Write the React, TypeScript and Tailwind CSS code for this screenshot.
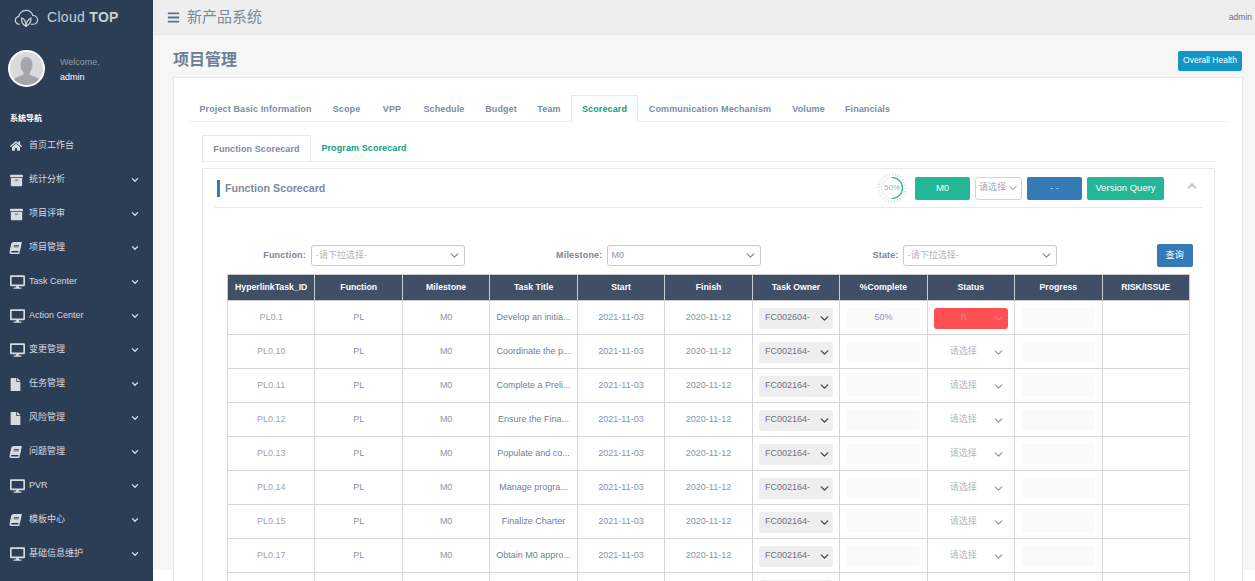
import React from "react";
import { FaHome, FaArchive, FaBook, FaDesktop, FaFile, FaBars } from "react-icons/fa";
import { ChevronDown, ChevronUp } from "lucide-react";

const FONT = "font-['Liberation_Sans','Noto_Sans_CJK_SC',sans-serif]";

const navItems = [
  { icon: "archive", label: "统计分析" },
  { icon: "archive", label: "项目评审" },
  { icon: "book", label: "项目管理" },
  { icon: "desktop", label: "Task Center" },
  { icon: "desktop", label: "Action Center" },
  { icon: "desktop", label: "变更管理" },
  { icon: "file", label: "任务管理" },
  { icon: "file", label: "风险管理" },
  { icon: "book", label: "问题管理" },
  { icon: "desktop", label: "PVR" },
  { icon: "book", label: "模板中心" },
  { icon: "desktop", label: "基础信息维护" }
];

const tabs = [
  { label: "Project Basic Information", width: "w-[133px]" },
  { label: "Scope", width: "w-[49px]" },
  { label: "VPP", width: "w-[42px]" },
  { label: "Schedule", width: "w-[62px]" },
  { label: "Budget", width: "w-[52px]" },
  { label: "Team", width: "w-[44px]" },
  { label: "Scorecard", width: "w-[67px]" },
  { label: "Communication Mechanism", width: "w-[144px]" },
  { label: "Volume", width: "w-[53px]" },
  { label: "Financials", width: "w-[65px]" }
];
const columns = ["HyperlinkTask_ID", "Function", "Milestone", "Task Title", "Start", "Finish", "Task Owner", "%Complete", "Status", "Progress", "RISK/ISSUE"];

const rows = [
  { id: "PL0.1", title: "Develop an initia...", owner: "FC002604-", pct: "50%", status: "R" },
  { id: "PL0.10", title: "Coordinate the p...", owner: "FC002164-" },
  { id: "PL0.11", title: "Complete a Preli...", owner: "FC002164-" },
  { id: "PL0.12", title: "Ensure the Fina...", owner: "FC002164-" },
  { id: "PL0.13", title: "Populate and co...", owner: "FC002164-" },
  { id: "PL0.14", title: "Manage progra...", owner: "FC002164-" },
  { id: "PL0.15", title: "Finalize Charter", owner: "FC002164-" },
  { id: "PL0.17", title: "Obtain M0 appro...", owner: "FC002164-" }
];

const cell = "border border-[#d6d6d6] text-center align-middle p-0 pt-px";

function NavIcon({ name }: { name: string }) {
  if (name === "archive") return <FaArchive className="w-[13px] h-[13px]" />;
  if (name === "book") return <FaBook className="w-[11px] h-3 -skew-x-12" />;
  if (name === "desktop") return <FaDesktop className="w-[15px] h-[14px]" />;
  return <FaFile className="w-[11px] h-[13px]" />;
}

function Logo() {
  return (
    <svg viewBox="0 0 26 20" className="w-[25px] h-[20px] text-[#c9d0d8]" fill="none" stroke="currentColor" strokeWidth="1.300">
      <path d="M6 16.500c-2.600 0-4.600-1.700-4.600-4 0-2 1.500-3.600 3.500-3.900C5.400 4.800 8.600 2 12.400 2c3.500 0 6.300 2.200 7.100 5.300 2.700.1 5 2 5 4.800 0 2.600-2.100 4.400-4.700 4.400h-2.500" />
      <path d="M12.500 18.500c-3.500-1.500-5-4.500-4.500-8.500 2.800.8 4.500 3.500 4.500 8.500z" />
      <path d="M12.500 18.500c.2-4 1.800-7 5-8.500.4 3.800-1.200 6.800-5 8.500z" />
    </svg>
  );
}

function Avatar() {
  return (
    <div className="w-[37px] h-[37px] rounded-full border-2 border-white bg-[#d9dadc] overflow-hidden shrink-0">
      <svg viewBox="0 0 33 33" className="w-full h-full" fill="#a4a6a9">
        <ellipse cx="16.500" cy="13" rx="6" ry="8" />
        <path d="M13.500 19h6v3.500l8 3.500c1.500.8 2 3 2 7H3.500c0-4 .5-6.200 2-7l8-3.500z" />
      </svg>
    </div>
  );
}

function Gauge() {
  return (
    <div className="relative w-[30px] h-[30px]">
      <svg viewBox="0 0 30 30" className="w-full h-full" fill="none">
        <circle cx="15" cy="15" r="13.500" stroke="#d5d8dc" strokeWidth="2" strokeDasharray="1 2" />
        <circle cx="15" cy="15" r="10.500" stroke="#e6e8ea" strokeWidth="1" />
        <path d="M15 4.500a10.500 10.500 0 0 1 0 21" stroke="#1ab394" strokeWidth="1.200" />
      </svg>
      <span className="absolute inset-0 flex items-center justify-center text-[8px] text-[#a6adb8]">50%</span>
    </div>
  );
}

function FilterSelect({ value, muted, className }: { value: string; muted?: boolean; className: string }) {
  return (
    <div className={`h-[21px] w-[154px] border border-[#c9c9c9] rounded-[3px] bg-white flex items-center justify-between pl-1 pr-[3px] text-[9px] font-normal tracking-normal ${muted ? "text-[#b0b6c0]" : "text-[#8a94a6]"} ${className}`}>
      <span>{value}</span>
      <ChevronDown className="w-[13px] h-[13px] text-[#7b8594]" strokeWidth={2} />
    </div>
  );
}

function TableRow({ row }: { row: (typeof rows)[number] }) {
  return (
    <tr className="h-[34px] text-[9px] text-[#8a94a6]">
      <td className={`${cell} text-[#a3a3a8]`}>{row.id}</td>
      <td className={cell}>PL</td>
      <td className={cell}>M0</td>
      <td className={`${cell} text-[#6f7f96]`}>{row.title}</td>
      <td className={cell}>2021-11-03</td>
      <td className={cell}>2020-11-12</td>
      <td className={cell}>
        <div className="mx-auto w-[74px] h-[21px] bg-[#eeeeee] rounded-[3px] flex items-center justify-between pl-[6px] pr-[2px] text-[#6b7280]">
          <span>{row.owner}</span>
          <ChevronDown className="w-[13px] h-[13px] text-[#444]" strokeWidth={2.500} />
        </div>
      </td>
      <td className={cell}>
        <div className="mx-auto w-[73px] h-[20px] bg-[#fafafa] rounded-[3px] flex items-center justify-center text-[#8a94a6]">{row.pct}</div>
      </td>
      <td className={cell}>
        {row.status ? (
          <div className="mx-auto w-[74px] h-[21px] bg-[#ff4f52] rounded-[3px] flex items-center justify-between pl-[27px] pr-[3px] text-[#d58a93]">
            <span>{row.status}</span>
            <ChevronDown className="w-[13px] h-[13px] text-[#d58a93]" strokeWidth={2} />
          </div>
        ) : (
          <div className="mx-auto w-[74px] h-[21px] flex items-center justify-between pl-4 pr-[3px] text-[#b0b6c0]">
            <span>请选择</span>
            <ChevronDown className="w-[13px] h-[13px] text-[#8a94a6]" strokeWidth={2} />
          </div>
        )}
      </td>
      <td className={cell}>
        <div className="mx-auto w-[73px] h-[20px] bg-[#fafafa] rounded-[3px]" />
      </td>
      <td className={cell} />
    </tr>
  );
}

export default function App() {
  return (
    <div className={`${FONT} flex w-[1255px] h-[581px] overflow-hidden bg-white`}>
      <aside className="w-[153px] shrink-0 bg-[#2c3e55] text-[#d5dbe3]">
        <div className="h-[35px] flex items-center pl-[14px] gap-[8px]">
          <Logo />
          <span className="text-[14px] tracking-[0.3px] text-[#c9d0d8]">Cloud <b>TOP</b></span>
        </div>
        <div className="flex items-center pl-2 mt-[15px] gap-[15px]">
          <Avatar />
          <div className="text-[9px] leading-[15px] pt-[3px]">
            <div className="text-[#8f9aa8]">Welcome,</div>
            <div className="text-white">admin</div>
          </div>
        </div>
        <div className="pl-[10px] mt-[26px] text-[8px] leading-3 font-bold text-white">系统导航</div>
        <nav className="mt-[4px]">
          <div className="h-[34px] flex items-center pl-[10px] text-[9px]">
            <FaHome className="w-3 h-3 mr-[7px]" />
            <span>首页工作台</span>
          </div>
          {navItems.map((item) => (
            <div key={item.label} className="h-[34px] flex items-center pl-[10px] pr-[13px] text-[9px]">
              <span className="w-[19px] shrink-0"><NavIcon name={item.icon} /></span>
              <span className="flex-1">{item.label}</span>
              <ChevronDown className="w-[10px] h-[10px]" strokeWidth={3} />
            </div>
          ))}
        </nav>
      </aside>

      <main className="flex-1 min-w-0">
        <header className="h-[35px] bg-[#eeeeee] border-b border-[#e3e3ea] flex items-center pl-[14px] pr-[3px]">
          <FaBars className="w-[13px] h-[13px] text-[#5c7189] mr-[7px]" />
          <span className="text-[15px] text-[#7c8797]">新产品系统</span>
          <span className="ml-auto text-[8.500px] text-[#6b7280]">admin</span>
        </header>

        <div className="h-[535px] bg-[#f6f6f6] pl-5 pr-3">
          <div className="h-[42px] flex items-center justify-between pt-[7px]">
            <h1 className="text-[16px] font-bold text-[#6f7f96]">项目管理</h1>
            <button className="w-[64px] h-[20px] mr-px mt-[2px] bg-[#1296c4] rounded-[2px] text-[8.500px] text-white">Overall Health</button>
          </div>

          <section className="bg-white border border-[#e7eaec] pt-[17px] pl-[15px] pr-[14px] h-[600px]">
            <div className="flex h-[27px] border-b border-[#eeeeee]">
              {tabs.map((tab) => (
                <div
                  key={tab.label}
                  className={`h-[27px] ${tab.width} pt-[2px] flex items-center justify-center text-[9px] font-bold tracking-[0.12px] ${
                    tab.label === "Scorecard" ? "bg-white border border-b-0 border-[#e7eaec] text-[#0f9d82]" : "text-[#7b8ba3]"
                  }`}
                >
                  {tab.label}
                </div>
              ))}
            </div>

            <div className="pl-[13px] pr-[13px]">
              <div className="flex h-[27px] mt-[13px] border-b border-[#eeeeee]">
                <div className="w-[109px] h-[27px] pt-[2px] border border-b-0 border-[#e7e7e7] flex items-center justify-center text-[9px] font-bold tracking-[0.1px] text-[#7b8ba3]">
                  Function Scorecard
                </div>
                <div className="w-[106px] pt-[2px] flex items-center justify-center text-[9px] font-bold tracking-[0.1px] text-[#0f9d82]">Program Scorecard</div>
              </div>

              <div className="mt-[6px] border border-[#e7eaec] h-[600px] px-[11px]">
                <div className="h-[39px] border-b border-[#e7eaec] flex items-center">
                  <span className="w-[3px] h-[17px] bg-[#337ab7] ml-[3px] mr-[5px]" />
                  <h2 className="text-[10.700px] font-bold text-[#7b8ba3]">Function Scorecard</h2>
                  <div className="ml-auto"><Gauge /></div>
                  <button className="ml-[8px] w-[55px] h-[23px] pt-px bg-[#23b795] rounded-[2px] text-[9.500px] text-white">M0</button>
                  <div className="ml-[5px] w-[47px] h-[23px] border border-[#d3d3d3] rounded-[3px] flex items-center justify-between pl-[3px] pr-[2px] text-[9px] text-[#a0a8b4]">
                    <span>请选择</span>
                    <ChevronDown className="w-[12px] h-[12px] text-[#7b8594]" strokeWidth={2} />
                  </div>
                  <button className="ml-[5px] w-[55px] h-[23px] pt-px bg-[#337ab7] rounded-[2px] text-[9.500px] text-[#c5d7e8]">- -</button>
                  <button className="ml-[5px] w-[77px] h-[23px] pt-px bg-[#23b795] rounded-[2px] text-[9.500px] text-white">Version Query</button>
                  <ChevronUp className="ml-[21px] mr-[4px] mb-[4px] w-[14px] h-[14px] text-[#c0c4ca]" strokeWidth={3.500} />
                </div>

                <div className="flex items-center h-[23px] mt-[36px] text-[9px] font-bold tracking-[0.2px] text-[#7b8594]">
                  <span className="w-[93px] text-right pr-[1px]">Function:</span>
                  <FilterSelect value="-请下拉选择-" muted className="ml-[4px]" />
                  <span className="ml-[91px]">Milestone:</span>
                  <FilterSelect value="M0" className="ml-[4px]" />
                  <span className="ml-[112px]">State:</span>
                  <FilterSelect value="-请下拉选择-" muted className="ml-[4px]" />
                  <button className="ml-[100px] w-[36px] h-[23px] bg-[#337ab7] rounded-[2px] text-[9px] font-normal text-white">查询</button>
                </div>

                <table className="mt-[7px] ml-[13px] w-[963px] table-fixed border-collapse">
                  <thead>
                    <tr className="h-[26px] bg-[#404f65] text-[8.700px] text-white">
                      {columns.map((col) => (
                        <th key={col} className="border border-[#c9ccd1] font-bold p-0">{col}</th>
                      ))}
                    </tr>
                  </thead>
                  <tbody>
                    {rows.map((row) => (
                      <TableRow key={row.id} row={row} />
                    ))}
                    {/* next row is cut by the window, only its select shows */}
                    <tr className="h-[34px]">
                      {columns.map((col) => (
                        <td key={col} className={cell}>
                          {col === "Task Owner" && <div className="mx-auto w-[74px] h-[21px] bg-[#eeeeee] rounded-[3px]" />}
                        </td>
                      ))}
                    </tr>
                  </tbody>
                </table>
              </div>
            </div>
          </section>
        </div>
      </main>
    </div>
  );
}
